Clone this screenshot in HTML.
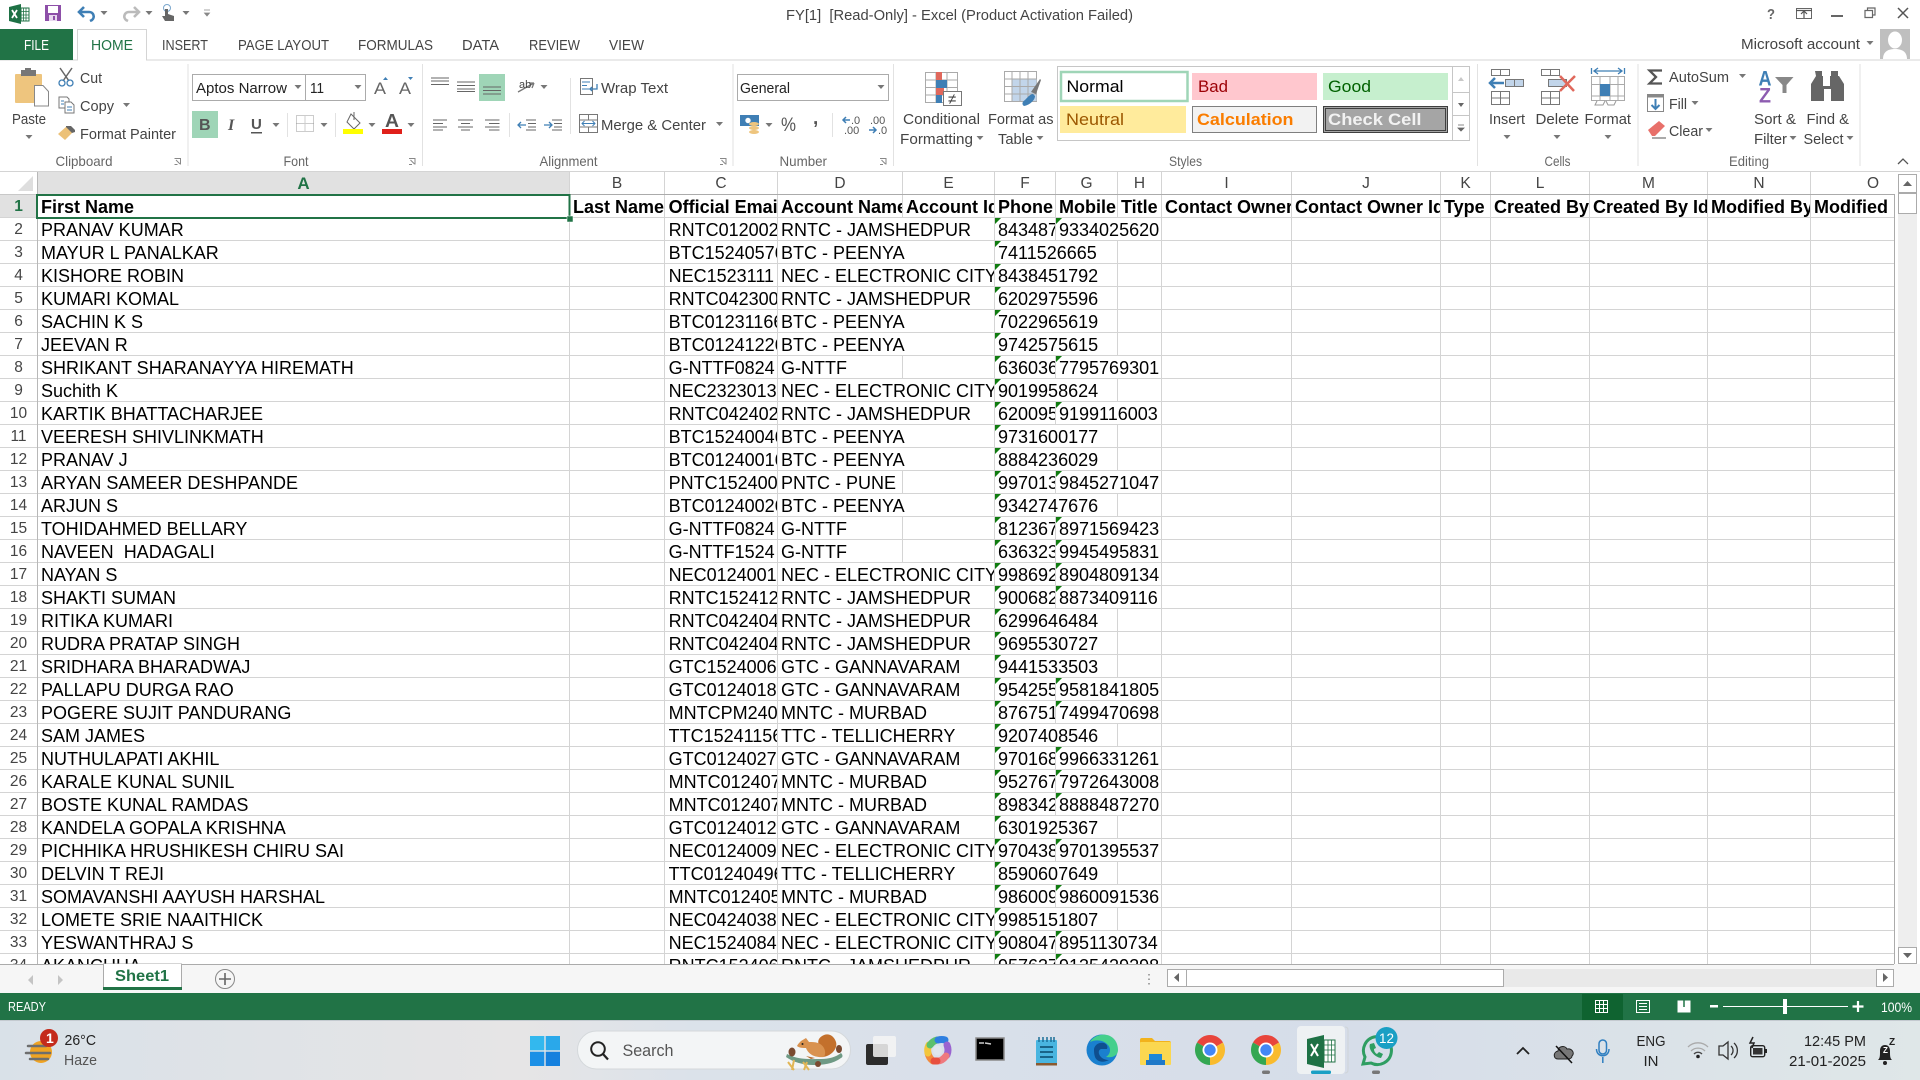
<!DOCTYPE html>
<html><head><meta charset="utf-8"><title>FY[1] [Read-Only] - Excel</title>
<style>
html,body{margin:0;padding:0;width:1920px;height:1080px;overflow:hidden;background:#fff}
.v{position:absolute;top:172px;height:792px;width:1px;background:#d4d4d4}
.hl{position:absolute;left:0;top:195px;width:1894px;height:769px;background:repeating-linear-gradient(#fff 0 22px,#d4d4d4 22px 23px)}
.h{position:absolute;top:172px;height:22px;font:15.5px/23px "Liberation Sans",sans-serif;color:#444;text-align:center;background:#fff}
.r{position:absolute;left:0;width:1894px;height:22px;font:18px/24px "Liberation Sans",sans-serif;color:#000}
.r span{position:absolute;top:0;height:22px;white-space:pre;overflow:hidden;padding-left:3px;box-sizing:border-box;background:#fff}
.r .n{left:0;width:37px;padding:0;text-align:center;color:#444;font-size:15.5px}
.a{left:38px;width:531px}.b{left:570px;width:94px}.r .c{left:665px;width:112px;padding-left:3.6px}
.d{left:778px;width:216px}.d0{left:778px;width:124px}.e{left:903px;width:91px}
.f,.f2,.g{background:linear-gradient(135deg,#107c10 4.2px,#fff 4.3px) !important}
.f{left:995px;width:60px}.f2{left:995px;width:122px}.g{left:1056px;width:105px}
.f0{left:995px;width:60px}.g0{left:1056px;width:61px}.t{left:1118px;width:43px}
.i{left:1162px;width:129px}.j{left:1292px;width:148px}.k{left:1441px;width:49px}
.l{left:1491px;width:98px}.m{left:1590px;width:117px}.o{left:1708px;width:102px}.p{left:1811px;width:83px}
.hd{font-weight:bold}
svg{position:absolute;left:0;top:0}
svg text{font-family:"Liberation Sans",sans-serif;font-size:15px;fill:#444}
</style></head><body>
<div class="hl"></div>
<div class="v" style="left:37px;background:#b8b8b8"></div>
<div class="v" style="left:569px"></div><div class="v" style="left:664px"></div><div class="v" style="left:777px"></div><div class="v" style="left:902px"></div><div class="v" style="left:994px"></div><div class="v" style="left:1055px"></div><div class="v" style="left:1117px"></div><div class="v" style="left:1161px"></div><div class="v" style="left:1291px"></div><div class="v" style="left:1440px"></div><div class="v" style="left:1490px"></div><div class="v" style="left:1589px"></div><div class="v" style="left:1707px"></div><div class="v" style="left:1810px"></div>
<div class="h" style="left:38px;width:531px;background:#e1e1e1;color:#217346;font-weight:bold;font-size:17px">A</div>
<div class="h" style="left:570px;width:94px">B</div><div class="h" style="left:665px;width:112px">C</div><div class="h" style="left:778px;width:124px">D</div><div class="h" style="left:903px;width:91px">E</div><div class="h" style="left:995px;width:60px">F</div><div class="h" style="left:1056px;width:61px">G</div><div class="h" style="left:1118px;width:43px">H</div><div class="h" style="left:1162px;width:129px">I</div><div class="h" style="left:1292px;width:148px">J</div><div class="h" style="left:1441px;width:49px">K</div><div class="h" style="left:1491px;width:98px">L</div><div class="h" style="left:1590px;width:117px">M</div><div class="h" style="left:1708px;width:102px">N</div><div class="h" style="left:1811px;width:83px;text-indent:41px">O</div>
<div class="r hd" style="top:195px"><span class="n" style="background:#e1e1e1;color:#217346;font-weight:bold">1</span><span class="a">First Name</span><span class="b">Last Name</span><span class="c">Official Email</span><span class="d0">Account Name</span><span class="e">Account Id</span><span class="f0">Phone</span><span class="g0">Mobile</span><span class="t">Title</span><span class="i">Contact Owner</span><span class="j">Contact Owner Id</span><span class="k">Type</span><span class="l">Created By</span><span class="m">Created By Id</span><span class="o">Modified By</span><span class="p">Modified</span></div>
<div class="r" style="top:218px"><span class="n">2</span><span class="a">PRANAV KUMAR</span><span class="c">RNTC0120026</span><span class="d">RNTC - JAMSHEDPUR</span><span class="f">8434873</span><span class="g">9334025620</span></div>
<div class="r" style="top:241px"><span class="n">3</span><span class="a">MAYUR L PANALKAR</span><span class="c">BTC15240576</span><span class="d">BTC - PEENYA</span><span class="f2">7411526665</span></div>
<div class="r" style="top:264px"><span class="n">4</span><span class="a">KISHORE ROBIN</span><span class="c">NEC1523111</span><span class="d">NEC - ELECTRONIC CITY</span><span class="f2">8438451792</span></div>
<div class="r" style="top:287px"><span class="n">5</span><span class="a">KUMARI KOMAL</span><span class="c">RNTC0423006</span><span class="d">RNTC - JAMSHEDPUR</span><span class="f2">6202975596</span></div>
<div class="r" style="top:310px"><span class="n">6</span><span class="a">SACHIN K S</span><span class="c">BTC01231166</span><span class="d">BTC - PEENYA</span><span class="f2">7022965619</span></div>
<div class="r" style="top:333px"><span class="n">7</span><span class="a">JEEVAN R</span><span class="c">BTC01241226</span><span class="d">BTC - PEENYA</span><span class="f2">9742575615</span></div>
<div class="r" style="top:356px"><span class="n">8</span><span class="a">SHRIKANT SHARANAYYA HIREMATH</span><span class="c">G-NTTF0824</span><span class="d0">G-NTTF</span><span class="f">6360369</span><span class="g">7795769301</span></div>
<div class="r" style="top:379px"><span class="n">9</span><span class="a">Suchith K</span><span class="c">NEC2323013</span><span class="d">NEC - ELECTRONIC CITY</span><span class="f2">9019958624</span></div>
<div class="r" style="top:402px"><span class="n">10</span><span class="a">KARTIK BHATTACHARJEE</span><span class="c">RNTC0424026</span><span class="d">RNTC - JAMSHEDPUR</span><span class="f">6200959</span><span class="g">9199116003</span></div>
<div class="r" style="top:425px"><span class="n">11</span><span class="a">VEERESH SHIVLINKMATH</span><span class="c">BTC15240046</span><span class="d">BTC - PEENYA</span><span class="f2">9731600177</span></div>
<div class="r" style="top:448px"><span class="n">12</span><span class="a">PRANAV J</span><span class="c">BTC01240016</span><span class="d">BTC - PEENYA</span><span class="f2">8884236029</span></div>
<div class="r" style="top:471px"><span class="n">13</span><span class="a">ARYAN SAMEER DESHPANDE</span><span class="c">PNTC1524006</span><span class="d0">PNTC - PUNE</span><span class="f">9970133</span><span class="g">9845271047</span></div>
<div class="r" style="top:494px"><span class="n">14</span><span class="a">ARJUN S</span><span class="c">BTC01240026</span><span class="d">BTC - PEENYA</span><span class="f2">9342747676</span></div>
<div class="r" style="top:517px"><span class="n">15</span><span class="a">TOHIDAHMED BELLARY</span><span class="c">G-NTTF0824</span><span class="d0">G-NTTF</span><span class="f">8123679</span><span class="g">8971569423</span></div>
<div class="r" style="top:540px"><span class="n">16</span><span class="a">NAVEEN  HADAGALI</span><span class="c">G-NTTF1524</span><span class="d0">G-NTTF</span><span class="f">6363233</span><span class="g">9945495831</span></div>
<div class="r" style="top:563px"><span class="n">17</span><span class="a">NAYAN S</span><span class="c">NEC0124001</span><span class="d">NEC - ELECTRONIC CITY</span><span class="f">9986923</span><span class="g">8904809134</span></div>
<div class="r" style="top:586px"><span class="n">18</span><span class="a">SHAKTI SUMAN</span><span class="c">RNTC1524126</span><span class="d">RNTC - JAMSHEDPUR</span><span class="f">9006823</span><span class="g">8873409116</span></div>
<div class="r" style="top:609px"><span class="n">19</span><span class="a">RITIKA KUMARI</span><span class="c">RNTC0424046</span><span class="d">RNTC - JAMSHEDPUR</span><span class="f2">6299646484</span></div>
<div class="r" style="top:632px"><span class="n">20</span><span class="a">RUDRA PRATAP SINGH</span><span class="c">RNTC0424046</span><span class="d">RNTC - JAMSHEDPUR</span><span class="f2">9695530727</span></div>
<div class="r" style="top:655px"><span class="n">21</span><span class="a">SRIDHARA BHARADWAJ</span><span class="c">GTC1524006</span><span class="d">GTC - GANNAVARAM</span><span class="f2">9441533503</span></div>
<div class="r" style="top:678px"><span class="n">22</span><span class="a">PALLAPU DURGA RAO</span><span class="c">GTC0124018</span><span class="d">GTC - GANNAVARAM</span><span class="f">9542553</span><span class="g">9581841805</span></div>
<div class="r" style="top:701px"><span class="n">23</span><span class="a">POGERE SUJIT PANDURANG</span><span class="c">MNTCPM2406</span><span class="d">MNTC - MURBAD</span><span class="f">8767513</span><span class="g">7499470698</span></div>
<div class="r" style="top:724px"><span class="n">24</span><span class="a">SAM JAMES</span><span class="c">TTC15241156</span><span class="d">TTC - TELLICHERRY</span><span class="f2">9207408546</span></div>
<div class="r" style="top:747px"><span class="n">25</span><span class="a">NUTHULAPATI AKHIL</span><span class="c">GTC0124027</span><span class="d">GTC - GANNAVARAM</span><span class="f">9701683</span><span class="g">9966331261</span></div>
<div class="r" style="top:770px"><span class="n">26</span><span class="a">KARALE KUNAL SUNIL</span><span class="c">MNTC0124076</span><span class="d">MNTC - MURBAD</span><span class="f">9527673</span><span class="g">7972643008</span></div>
<div class="r" style="top:793px"><span class="n">27</span><span class="a">BOSTE KUNAL RAMDAS</span><span class="c">MNTC0124076</span><span class="d">MNTC - MURBAD</span><span class="f">8983423</span><span class="g">8888487270</span></div>
<div class="r" style="top:816px"><span class="n">28</span><span class="a">KANDELA GOPALA KRISHNA</span><span class="c">GTC0124012</span><span class="d">GTC - GANNAVARAM</span><span class="f2">6301925367</span></div>
<div class="r" style="top:839px"><span class="n">29</span><span class="a">PICHHIKA HRUSHIKESH CHIRU SAI</span><span class="c">NEC0124009</span><span class="d">NEC - ELECTRONIC CITY</span><span class="f">9704383</span><span class="g">9701395537</span></div>
<div class="r" style="top:862px"><span class="n">30</span><span class="a">DELVIN T REJI</span><span class="c">TTC01240496</span><span class="d">TTC - TELLICHERRY</span><span class="f2">8590607649</span></div>
<div class="r" style="top:885px"><span class="n">31</span><span class="a">SOMAVANSHI AAYUSH HARSHAL</span><span class="c">MNTC0124056</span><span class="d">MNTC - MURBAD</span><span class="f">9860093</span><span class="g">9860091536</span></div>
<div class="r" style="top:908px"><span class="n">32</span><span class="a">LOMETE SRIE NAAITHICK</span><span class="c">NEC0424038</span><span class="d">NEC - ELECTRONIC CITY</span><span class="f2">9985151807</span></div>
<div class="r" style="top:931px"><span class="n">33</span><span class="a">YESWANTHRAJ S</span><span class="c">NEC1524084</span><span class="d">NEC - ELECTRONIC CITY</span><span class="f">9080473</span><span class="g">8951130734</span></div>
<div class="r" style="top:954px"><span class="n">34</span><span class="a">AKANCHHA</span><span class="c">RNTC1524066</span><span class="d">RNTC - JAMSHEDPUR</span><span class="f">9576373</span><span class="g">9135429298</span></div>

<svg width="1920" height="1080" viewBox="0 0 1920 1080">
<defs>
<path id="k" d="M-3.5-2h7l-3.5 4z" fill="#777"/>
<linearGradient id="tb" x1="0" x2="1" y1="0" y2="0"><stop offset="0" stop-color="#d9e1e8"/><stop offset=".27" stop-color="#e6e5e6"/><stop offset=".36" stop-color="#dbe2ea"/><stop offset=".7" stop-color="#d6dde9"/><stop offset="1" stop-color="#dfe7e8"/></linearGradient>
<g id="chr"><path d="M0 0L-13-7.5A15 15 0 0 1 13-7.5Z" fill="#e8453c"/><path d="M0 0L13-7.5A15 15 0 0 1 0 15Z" fill="#f9bb2d"/><path d="M0 0L0 15A15 15 0 0 1-13-7.5Z" fill="#34a752"/><circle r="7.5" fill="#fff"/><circle r="5.7" fill="#4387f5"/></g>
</defs>

<!-- grid overlays -->
<rect x="37" y="194" width="1857" height="1" fill="#ababab"/>
<rect x="0" y="194" width="37" height="1" fill="#c8c8c8"/>
<rect x="1894" y="194" width="1" height="770" fill="#ababab"/>
<path d="M33 176V191H18Z" fill="#dedede"/>
<rect x="37" y="195" width="532.5" height="23" fill="none" stroke="#217346" stroke-width="2"/>
<rect x="567" y="216" width="6" height="6" fill="#217346" stroke="#fff" stroke-width=".5"/>

<!-- top white chrome -->
<rect x="0" y="0" width="1920" height="171" fill="#fff"/>
<rect x="0" y="171" width="1920" height="1" fill="#d4d4d4"/>
<rect x="0" y="59.5" width="1920" height="1" fill="#d4d4d4"/>
<rect x="0" y="29" width="73" height="31" fill="#217346"/>
<path d="M77.5 60V29.5H146.5V60" fill="#fff" stroke="#d4d4d4"/>
<rect x="78" y="59" width="68" height="2" fill="#fff"/>

<!-- QAT -->
<path d="M9 7L21 4V24L9 21Z" fill="#1e7145"/><rect x="21" y="8" width="8" height="13" fill="#fff" stroke="#217346"/><path d="M23.500 8v13M26 8v13M21 11.500h8M21 15h8M21 18h8" stroke="#217346" stroke-width=".8"/>
<path d="M12 10l5 8M17 10l-5 8" stroke="#fff" stroke-width="1.800"/>
<rect x="45" y="5" width="16" height="16" fill="#8d4fa8"/><rect x="48" y="6" width="10" height="7" fill="#fff"/><rect x="49" y="15" width="8" height="6" fill="#e8d8ef"/><rect x="53" y="16" width="2" height="4" fill="#8d4fa8"/>
<path d="M84 7l-5 5 5 5" fill="none" stroke="#3f7fb5" stroke-width="2.600"/><path d="M80 12h9a4.500 4.500 0 0 1 3 8l-2 1" fill="none" stroke="#3f7fb5" stroke-width="2.600"/>
<use href="#k" x="104" y="13"/>
<path d="M134 7l5 5-5 5" fill="none" stroke="#bbb" stroke-width="2.600"/><path d="M138 12h-9a4.500 4.500 0 0 0-3 8l2 1" fill="none" stroke="#bbb" stroke-width="2.600"/>
<use href="#k" x="149" y="13"/>
<circle cx="167" cy="8" r="3.500" fill="none" stroke="#7aa6cc"/><path d="M165 9h3v5l6 2v5h-9l-3-5h3z" fill="#666"/>
<use href="#k" x="186" y="13"/>
<path d="M204 10h6M204.500 13h5l-2.500 3z" stroke="#888" fill="#888" stroke-width=".8"/>

<text x="786" y="20" textLength="347" lengthAdjust="spacingAndGlyphs" xml:space="preserve">FY[1]  [Read-Only] - Excel (Product Activation Failed)</text>

<!-- window controls -->
<text x="1767" y="19" textLength="8" lengthAdjust="spacingAndGlyphs" style="font-size:15px;fill:#666;font-weight:bold">?</text>
<rect x="1796.500" y="8.500" width="15" height="10" fill="none" stroke="#666"/><path d="M1796 10.500h16M1804 18v-6M1801 14l3-3 3 3" fill="none" stroke="#555" stroke-width="1.200"/>
<rect x="1831" y="15" width="12" height="2" fill="#666"/>
<path d="M1867.500 10.500V8h7.500v7h-2.500M1865 10.500h7.500v7H1865z" fill="none" stroke="#666" stroke-width="1.200"/>
<path d="M1898 8l10 10M1908 8l-10 10" stroke="#555" stroke-width="1.500"/>
<text x="1741" y="49" textLength="119" lengthAdjust="spacingAndGlyphs">Microsoft account</text>
<use href="#k" x="1870" y="43"/>
<rect x="1880" y="29" width="30" height="30" fill="#bfbfbf"/><ellipse cx="1895" cy="40" rx="7" ry="8.500" fill="#fff"/><path d="M1883 59c0-8 6-10 12-10s12 2 12 10z" fill="#fff"/>

<!-- tabs -->
<text x="24" y="50" textLength="25" lengthAdjust="spacingAndGlyphs" style="fill:#fff">FILE</text>
<text x="91" y="50" textLength="42" lengthAdjust="spacingAndGlyphs" style="fill:#217346">HOME</text>
<text x="162" y="50" textLength="46" lengthAdjust="spacingAndGlyphs">INSERT</text>
<text x="238" y="50" textLength="91" lengthAdjust="spacingAndGlyphs">PAGE LAYOUT</text>
<text x="358" y="50" textLength="75" lengthAdjust="spacingAndGlyphs">FORMULAS</text>
<text x="462" y="50" textLength="37" lengthAdjust="spacingAndGlyphs">DATA</text>
<text x="529" y="50" textLength="51" lengthAdjust="spacingAndGlyphs">REVIEW</text>
<text x="609" y="50" textLength="35" lengthAdjust="spacingAndGlyphs">VIEW</text>

<!-- separators -->
<path d="M188 64v102M422.500 64v102M733 64v102M893.500 64v102M1477.500 64v102M1638 64v102M1860 64v102" stroke="#e2e2e2"/>

<!-- Clipboard -->
<rect x="15" y="74" width="27" height="29" fill="#eec57e" rx="1"/><rect x="21" y="70" width="15" height="6" fill="#777"/><rect x="25" y="68" width="6" height="4" fill="#777"/>
<path d="M34.500 85.500H43l5.500 6V106h-14z" fill="#fff" stroke="#888"/>
<text x="12" y="124" textLength="34" lengthAdjust="spacingAndGlyphs">Paste</text>
<use href="#k" x="29" y="137"/>
<path d="M60 68l9 13M72 68l-9 13" stroke="#666" stroke-width="1.500"/><circle cx="62" cy="83" r="3" fill="none" stroke="#3f7fb5" stroke-width="1.300"/><circle cx="70" cy="83" r="3" fill="none" stroke="#3f7fb5" stroke-width="1.300"/>
<text x="80" y="83" textLength="22" lengthAdjust="spacingAndGlyphs">Cut</text>
<path d="M59 97h8l2 2v9H59z" fill="#fff" stroke="#777"/><path d="M65 102h6l3 3v8h-9z" fill="#fff" stroke="#777"/><path d="M67 107h5M67 110h5M61 101h3M61 104h3" stroke="#3f7fb5"/>
<text x="80" y="111" textLength="34" lengthAdjust="spacingAndGlyphs">Copy</text>
<use href="#k" x="126.500" y="105"/>
<path d="M58 134l9-8 6 6-8 8z" fill="#ecc178"/><path d="M66 126l5 0 4 4v2l-3 1-6-6z" fill="#666"/>
<text x="80" y="139" textLength="96" lengthAdjust="spacingAndGlyphs">Format Painter</text>
<text x="55.500" y="166" textLength="57" lengthAdjust="spacingAndGlyphs" style="fill:#666;font-size:14px">Clipboard</text>
<path d="M174.500 158.500h6v6M176 160l4 4M174.500 164.500h3" fill="none" stroke="#888"/>

<!-- Font -->
<rect x="192.500" y="74.500" width="113" height="26" fill="#fff" stroke="#ababab"/><rect x="305.500" y="74.500" width="60" height="26" fill="#fff" stroke="#ababab"/>
<text x="196" y="93" textLength="91" lengthAdjust="spacingAndGlyphs" style="fill:#222">Aptos Narrow</text>
<use href="#k" x="298" y="87"/>
<text x="310" y="93" textLength="14" lengthAdjust="spacingAndGlyphs" style="fill:#222">11</text>
<use href="#k" x="358" y="87"/>
<text x="374" y="94" style="font-size:17px;fill:#666" textLength="12" lengthAdjust="spacingAndGlyphs">A</text><path d="M383 80l2.500-3 2.500 3z" fill="#3f7fb5"/>
<text x="399" y="94" style="font-size:17px;fill:#666" textLength="12" lengthAdjust="spacingAndGlyphs">A</text><path d="M408 77l2.500 3 2.500-3z" fill="#3f7fb5"/>
<rect x="192" y="111" width="26" height="27" fill="#9fd5b7"/>
<text x="199" y="130" style="font-size:16px;font-weight:bold;fill:#555">B</text>
<text x="228" y="130" style="font-size:16px;font-style:italic;font-weight:bold;fill:#555;font-family:'Liberation Serif',serif">I</text>
<text x="251" y="129" style="font-size:15px;font-weight:bold;fill:#555">U</text><rect x="251" y="132" width="11" height="1.500" fill="#555"/>
<use href="#k" x="276" y="125"/>
<path d="M287.500 113v24M335.500 113v24M509.500 113v24M570.500 78v56M832.500 113v24" stroke="#e2e2e2"/>
<rect x="296.500" y="115.500" width="17" height="16" fill="none" stroke="#999" stroke-dasharray="1 1"/><path d="M305 115.500v16M296.500 123.500h17" stroke="#999" stroke-dasharray="1 1"/>
<use href="#k" x="324" y="125"/>
<path d="M351 114l9 9-6 6-7-7z" fill="#fff" stroke="#666"/><path d="M354 112v8" stroke="#666"/><rect x="343" y="129" width="20" height="5" fill="#ffff00"/>
<use href="#k" x="372" y="125"/>
<text x="385" y="127" style="font-size:18px;fill:#555;font-weight:bold" textLength="14" lengthAdjust="spacingAndGlyphs">A</text><rect x="382" y="129" width="20" height="5" fill="#e0201a"/>
<use href="#k" x="411" y="125"/>
<text x="283.500" y="166" textLength="25" lengthAdjust="spacingAndGlyphs" style="fill:#666;font-size:14px">Font</text>
<path d="M409 158.500h6v6M410.500 160l4 4M409 164.500h3" fill="none" stroke="#888"/>

<!-- Alignment -->
<path d="M431 78h18M431 81h18M431 84.500h18" stroke="#666"/>
<path d="M457 82h18M457 85.500h18M457 89h18M457 91.500h18" stroke="#666"/>
<rect x="479" y="74" width="26" height="27" fill="#9fd5b7"/>
<path d="M483 87h18M483 90.500h18M483 94h18" stroke="#666"/>
<path d="M518 92l16-9M534 83l-5 0M534 83l-2 5" fill="none" stroke="#777" stroke-width="1.300"/><text x="519" y="88" style="font-size:11px">ab</text>
<use href="#k" x="544" y="87"/>
<path d="M433 120h14M433 123.500h10M433 127h14M433 130h10M458 120h15M461 123.500h9M458 127h15M461 130h9M485 120h14.500M489 123.500h10.500M485 127h14.500M489 130h10.500" stroke="#666"/>
<path d="M526 120h10M526 130h10M528 123.500h8M528 127h8" stroke="#666"/><path d="M518 125h8M521 122l-3 3 3 3" stroke="#3f7fb5" stroke-width="1.300" fill="none"/>
<path d="M552 120h10M552 130h10M554 123.500h8M554 127h8" stroke="#666"/><path d="M544 125h8M549 122l3 3-3 3" stroke="#3f7fb5" stroke-width="1.300" fill="none"/>
<rect x="580.500" y="78.500" width="12" height="16" fill="#fff" stroke="#777"/><path d="M582 82h8M582 85.500h5M582 89h8" stroke="#3f7fb5"/><path d="M597 84v5h-7M592 87l-2 2 2 2" fill="none" stroke="#3f7fb5" stroke-width="1.300"/>
<text x="601" y="93" textLength="67" lengthAdjust="spacingAndGlyphs">Wrap Text</text>
<rect x="579.500" y="114.500" width="18" height="18" fill="#fff" stroke="#777"/><path d="M579.500 120h18M579.500 127h18M588.500 114.500v5M588.500 127v5" stroke="#777"/><path d="M582 123.500h13M584.500 121l-2.500 2.500 2.500 2.500M592.500 121l2.500 2.500-2.500 2.500" fill="none" stroke="#3f7fb5"/>
<text x="601" y="130" textLength="105" lengthAdjust="spacingAndGlyphs">Merge &amp; Center</text>
<use href="#k" x="719.500" y="124"/>
<text x="539.500" y="166" textLength="58" lengthAdjust="spacingAndGlyphs" style="fill:#666;font-size:14px">Alignment</text>
<path d="M720 158.500h6v6M721.500 160l4 4M720 164.500h3" fill="none" stroke="#888"/>

<!-- Number -->
<rect x="737.500" y="74.500" width="151" height="26" fill="#fff" stroke="#ababab"/>
<text x="740" y="93" textLength="50" lengthAdjust="spacingAndGlyphs" style="fill:#222">General</text>
<use href="#k" x="881" y="87"/>
<rect x="740" y="115" width="19" height="11" fill="#3f7fb5"/><circle cx="748" cy="120.500" r="2.700" fill="#fff"/><ellipse cx="754" cy="124" rx="5" ry="2" fill="#eec57e"/><ellipse cx="754" cy="128" rx="5" ry="2" fill="#eec57e"/><ellipse cx="754" cy="132" rx="5" ry="2" fill="#eec57e"/>
<use href="#k" x="769" y="125"/>
<text x="781" y="131" style="font-size:19px;fill:#555" textLength="15" lengthAdjust="spacingAndGlyphs">%</text>
<text x="813" y="124" style="font-size:19px;font-weight:bold;fill:#555">,</text>
<text x="851" y="124" style="font-size:11px;fill:#555">.0</text><text x="844" y="134" style="font-size:11px;fill:#555">.00</text><path d="M843 120h7M846 117l-3 3 3 3" stroke="#3f7fb5" stroke-width="1.500" fill="none"/>
<text x="870" y="124" style="font-size:11px;fill:#555">.00</text><text x="878" y="134" style="font-size:11px;fill:#555">.0</text><path d="M869 130h7M873 127l3 3-3 3" stroke="#3f7fb5" stroke-width="1.500" fill="none"/>
<text x="779.500" y="166" textLength="47.500" lengthAdjust="spacingAndGlyphs" style="fill:#666;font-size:14px">Number</text>
<path d="M880 158.500h6v6M881.500 160l4 4M880 164.500h3" fill="none" stroke="#888"/>

<!-- Conditional Formatting -->
<g fill="none" stroke="#aaa"><rect x="925.500" y="72.500" width="32" height="30"/><path d="M936 72.500v30M947 72.500v30M925.500 80h32M925.500 87.500h32M925.500 95h32"/></g>
<rect x="936" y="72" width="6" height="8" fill="#e0685c"/><rect x="936" y="80" width="11" height="8" fill="#3f7fb5"/><rect x="936" y="88" width="8" height="7" fill="#e0685c"/><rect x="936" y="95" width="6" height="8" fill="#3f7fb5"/>
<rect x="943.500" y="91.500" width="18" height="14" fill="#fff" stroke="#777"/><text x="948" y="104" style="font-size:15px;fill:#444">≠</text>
<text x="903" y="124" textLength="77" lengthAdjust="spacingAndGlyphs">Conditional</text>
<text x="900" y="144" textLength="73" lengthAdjust="spacingAndGlyphs">Formatting</text>
<use href="#k" x="980" y="138"/>
<!-- Format as Table -->
<rect x="1004.500" y="71.500" width="32" height="30" fill="#fff" stroke="#aaa"/><rect x="1012" y="79" width="24.500" height="22" fill="#c2d5ea"/><path d="M1012 71.500v30M1020 71.500v30M1028 71.500v30M1004.500 79h32M1004.500 86.500h32M1004.500 94h32" stroke="#aaa"/>
<path d="M1031 92l9-13 1 1-5 14z" fill="#777"/><path d="M1024 106c-3-2-1-5 1-6 2-2 5-6 8-6l2 2c0 4-5 9-11 10z" fill="#3f7fb5"/>
<text x="988" y="124" textLength="65.500" lengthAdjust="spacingAndGlyphs">Format as</text>
<text x="998" y="144" textLength="35" lengthAdjust="spacingAndGlyphs">Table</text>
<use href="#k" x="1040" y="138"/>

<!-- Styles gallery -->
<rect x="1057.500" y="66.500" width="412" height="74" fill="#fff" stroke="#c6c6c6"/>
<rect x="1061" y="72" width="126.500" height="29" fill="#fff" stroke="#9fd5b7" stroke-width="2.500"/>
<text x="1066.500" y="92" textLength="57" lengthAdjust="spacingAndGlyphs" style="fill:#000;font-size:17px">Normal</text>
<rect x="1192" y="73" width="125" height="27" fill="#ffc7ce"/>
<text x="1198" y="92" textLength="30" lengthAdjust="spacingAndGlyphs" style="fill:#9c0006;font-size:17px">Bad</text>
<rect x="1323" y="73" width="125" height="27" fill="#c6efce"/>
<text x="1328" y="92" textLength="43" lengthAdjust="spacingAndGlyphs" style="fill:#006100;font-size:17px">Good</text>
<rect x="1060" y="106" width="126" height="27" fill="#ffeb9c"/>
<text x="1066" y="125" textLength="58" lengthAdjust="spacingAndGlyphs" style="fill:#9c5700;font-size:17px">Neutral</text>
<rect x="1192.500" y="106.500" width="124" height="26" fill="#f2f2f2" stroke="#7f7f7f"/>
<text x="1197" y="125" textLength="96.500" lengthAdjust="spacingAndGlyphs" style="fill:#fa7d00;font-size:17px;font-weight:bold">Calculation</text>
<rect x="1323.500" y="106.500" width="124" height="26" fill="#a5a5a5" stroke="#3f3f3f"/><rect x="1325.500" y="108.500" width="120" height="22" fill="none" stroke="#3f3f3f"/>
<text x="1328" y="125" textLength="93.500" lengthAdjust="spacingAndGlyphs" style="fill:#f2f2f2;font-size:17px;font-weight:bold">Check Cell</text>
<path d="M1452.500 66.500v74M1452.500 92.500h17M1452.500 115.500h17" stroke="#c6c6c6"/>
<path d="M1458 81h6l-3-4z" fill="#c8c8c8"/><path d="M1458 103h6l-3 4z" fill="#666"/><path d="M1458 125h6M1458 128h6l-3 3z" stroke="#666" fill="#666" stroke-width=".8"/>
<text x="1169" y="166" textLength="33" lengthAdjust="spacingAndGlyphs" style="fill:#666;font-size:14px">Styles</text>

<!-- Cells -->
<rect x="1491.500" y="69.500" width="18" height="6" fill="#fff" stroke="#777"/><path d="M1500.500 69.500v6" stroke="#777"/>
<path d="M1490 83h14M1495 78l-5 5 5 5" fill="none" stroke="#3f7fb5" stroke-width="2.500"/><rect x="1505.500" y="79.500" width="18" height="7" fill="#c2d5ea" stroke="#777"/><path d="M1514.500 79.500v7" stroke="#777"/>
<rect x="1491.500" y="91.500" width="18" height="13" fill="#fff" stroke="#777"/><path d="M1500.500 91.500v13M1491.500 98h18" stroke="#777"/>
<text x="1489" y="124" textLength="36" lengthAdjust="spacingAndGlyphs">Insert</text><use href="#k" x="1507" y="137"/>
<rect x="1541.500" y="69.500" width="18" height="6" fill="#fff" stroke="#777"/><path d="M1550.500 69.500v6" stroke="#777"/>
<rect x="1548.500" y="79.500" width="18" height="7" fill="#c2d5ea" stroke="#777"/>
<path d="M1560 76l14 15M1575 76l-15 15" stroke="#e0685c" stroke-width="2.500"/>
<rect x="1541.500" y="91.500" width="18" height="13" fill="#fff" stroke="#777"/><path d="M1550.500 91.500v13M1541.500 98h18" stroke="#777"/>
<text x="1535.500" y="124" textLength="43.500" lengthAdjust="spacingAndGlyphs">Delete</text><use href="#k" x="1557" y="137"/>
<path d="M1594 71h28M1598 68l-4 3 4 3M1618 68l4 3-4 3M1591.500 68v6M1624.500 68v6" fill="none" stroke="#3f7fb5" stroke-width="1.300"/>
<rect x="1591.500" y="76.500" width="33" height="24" fill="#fff" stroke="#aaa"/><path d="M1600 76.500v24M1610 76.500v24M1618 76.500v24M1591.500 84.500h33M1591.500 96h33" stroke="#aaa"/><rect x="1600" y="84" width="10" height="12" fill="#3f7fb5"/>
<path d="M1597 101l-2 4h8l2-4M1606 101l2 4h6l2-4" fill="none" stroke="#999"/>
<text x="1584.500" y="124" textLength="46.500" lengthAdjust="spacingAndGlyphs">Format</text><use href="#k" x="1608" y="137"/>
<text x="1544.500" y="166" textLength="26" lengthAdjust="spacingAndGlyphs" style="fill:#666;font-size:14px">Cells</text>

<!-- Editing -->
<path d="M1662 70.500h-12.500l6.500 6.500-6.500 6.500H1662" fill="none" stroke="#555" stroke-width="2.300"/>
<text x="1669" y="82" textLength="60" lengthAdjust="spacingAndGlyphs">AutoSum</text><use href="#k" x="1742.500" y="76"/>
<rect x="1647.500" y="94.500" width="16" height="17" fill="#fff" stroke="#888"/><rect x="1647.500" y="94.500" width="16" height="3" fill="#888"/><path d="M1655.500 99v10M1651.500 105l4 4 4-4" fill="none" stroke="#3f7fb5" stroke-width="2"/>
<text x="1669" y="109" textLength="18" lengthAdjust="spacingAndGlyphs">Fill</text><use href="#k" x="1695" y="103"/>
<path d="M1648 130l11-9 6 5-10 10h-3z" fill="#e8706a"/><path d="M1652 138h14" stroke="#555"/>
<text x="1669" y="136" textLength="34" lengthAdjust="spacingAndGlyphs">Clear</text><use href="#k" x="1709" y="130"/>
<text x="1758.500" y="85.500" textLength="13" lengthAdjust="spacingAndGlyphs" style="font-size:21px;fill:#3f7fb5;font-weight:bold">A</text>
<text x="1759" y="102.500" textLength="12" lengthAdjust="spacingAndGlyphs" style="font-size:21px;fill:#8d5cb0;font-weight:bold">Z</text>
<path d="M1775 77h18.500l-7 8v8h-4v-8z" fill="#888"/>
<text x="1754" y="124" textLength="42" lengthAdjust="spacingAndGlyphs">Sort &amp;</text>
<text x="1754" y="144" textLength="33" lengthAdjust="spacingAndGlyphs">Filter</text><use href="#k" x="1793" y="138"/>
<path d="M1815 71h7v5h1v10h7V76h1v-5h7v5h1l5 8v17h-13V89h-7v12h-13V84l5-8z" fill="#666"/>
<text x="1806.500" y="124" textLength="42.500" lengthAdjust="spacingAndGlyphs">Find &amp;</text>
<text x="1803.500" y="144" textLength="40" lengthAdjust="spacingAndGlyphs">Select</text><use href="#k" x="1850" y="138"/>
<text x="1729" y="166" textLength="40" lengthAdjust="spacingAndGlyphs" style="fill:#666;font-size:14px">Editing</text>
<path d="M1898 164l5-5 5 5" fill="none" stroke="#555" stroke-width="1.300"/>

<!-- vertical scrollbar -->
<rect x="1895" y="172" width="25" height="792" fill="#fff"/>
<rect x="1898" y="174" width="19" height="790" fill="#eeeeee"/>
<rect x="1898.500" y="174.500" width="18" height="18" fill="#fff" stroke="#ababab"/><path d="M1903 186h9l-4.500-5z" fill="#666"/>
<rect x="1898.500" y="193.500" width="18" height="20" fill="#fff" stroke="#ababab"/>
<rect x="1898.500" y="947.500" width="18" height="16" fill="#fff" stroke="#ababab"/><path d="M1903 953h9l-4.500 5z" fill="#666"/>

<!-- sheet bar -->
<rect x="0" y="964" width="1920" height="29" fill="#f6f6f6"/>
<rect x="0" y="964" width="1894" height="1" fill="#ababab"/>
<rect x="103.500" y="964" width="78" height="25" fill="#fff" stroke="#ababab"/><rect x="103" y="987" width="79" height="3" fill="#217346"/><rect x="104" y="964" width="77" height="2" fill="#fff"/>
<text x="115" y="981" textLength="54" lengthAdjust="spacingAndGlyphs" style="fill:#217346;font-weight:bold;font-size:16px">Sheet1</text>
<path d="M33 975v10l-5-5zM58 975v10l5-5z" fill="#c4c4c4"/>
<circle cx="225" cy="979" r="9.500" fill="none" stroke="#888"/><path d="M225 973v12M219 979h12" stroke="#666" stroke-width="1.600"/>
<path d="M1149 974v1.500M1149 978.500v1.500M1149 983v1.500" stroke="#888" stroke-width="1.500"/>
<rect x="1167.500" y="969.500" width="19" height="17" fill="#fff" stroke="#ababab"/><path d="M1179 973v9l-5-4.500z" fill="#666"/>
<rect x="1187" y="969" width="689" height="18" fill="#e9e9e9"/>
<rect x="1186.500" y="969.500" width="317" height="17" fill="#fff" stroke="#ababab"/>
<rect x="1876.500" y="969.500" width="17" height="17" fill="#fff" stroke="#ababab"/><path d="M1883 973v9l5-4.500z" fill="#666"/>

<!-- status bar -->
<rect x="0" y="993" width="1920" height="27" fill="#217346"/>
<text x="8" y="1011" textLength="38" lengthAdjust="spacingAndGlyphs" style="fill:#fff;font-size:13px">READY</text>
<rect x="1582" y="994" width="41" height="26" fill="#0f6330"/>
<g fill="none" stroke="#fff"><rect x="1595.500" y="1000.500" width="12" height="12"/><path d="M1599.500 1000.500v12M1603.500 1000.500v12M1595.500 1004.500h12M1595.500 1008.500h12"/><rect x="1636.500" y="1000.500" width="13" height="12"/><path d="M1639 1003.500h8M1639 1006.500h8M1639 1009.500h8"/></g>
<rect x="1677.500" y="1000.500" width="13" height="12" fill="#fff"/><path d="M1684 1000v7" stroke="#217346" stroke-width="1.500"/>
<rect x="1710" y="1005" width="8" height="2.500" fill="#fff"/><rect x="1723" y="1006" width="125" height="1" fill="#fff"/><rect x="1783" y="999" width="4" height="15" fill="#fff"/>
<path d="M1858 1001v11M1852.500 1006.500h11" stroke="#fff" stroke-width="2.200"/>
<text x="1881" y="1012" textLength="31" lengthAdjust="spacingAndGlyphs" style="fill:#fff;font-size:14px">100%</text>

<!-- taskbar -->
<rect x="0" y="1020" width="1920" height="60" fill="url(#tb)"/><rect x="0" y="1020" width="1920" height="1" fill="#c4cad0"/>
<circle cx="41" cy="1052" r="11" fill="#f0a322"/><path d="M28 1046h18M26 1053h24M30 1059h18" stroke="#6e6e6e" stroke-width="2.500" stroke-linecap="round"/>
<circle cx="49" cy="1038" r="9" fill="#c42b1c"/><text x="46" y="1043" style="fill:#fff;font-size:14px;font-weight:bold">1</text>
<text x="64.500" y="1045" textLength="31.500" lengthAdjust="spacingAndGlyphs" style="fill:#222">26°C</text>
<text x="64" y="1065" textLength="33" lengthAdjust="spacingAndGlyphs" style="fill:#555">Haze</text>
<rect x="530" y="1036" width="14.300" height="14.300" fill="#33b8ee"/><rect x="545.700" y="1036" width="14.300" height="14.300" fill="#2aa8ea"/><rect x="530" y="1051.700" width="14.300" height="14.300" fill="#1c90e6"/><rect x="545.700" y="1051.700" width="14.300" height="14.300" fill="#1580de"/>
<rect x="577.500" y="1031" width="273" height="38" rx="19" fill="#f3f5f6" stroke="#d4d8db"/>
<circle cx="598" cy="1049" r="6.800" fill="none" stroke="#222" stroke-width="2"/><path d="M603 1054l5 5.500" stroke="#222" stroke-width="2.200"/>
<text x="622.500" y="1056" textLength="51" lengthAdjust="spacingAndGlyphs" style="font-size:17px;fill:#555">Search</text>
<!-- squirrel on branch -->
<path d="M787 1054c12 6 22 5 34 5 8 0 15-2 20-6 2 2 2 4 0 5-8 6-18 7-28 7-10 0-20-3-27-8z" fill="#6f9a85"/>
<ellipse cx="792" cy="1052" rx="3.500" ry="4.500" fill="#7a4a30"/><ellipse cx="839" cy="1049" rx="3" ry="4" fill="#7a4a30"/><ellipse cx="818" cy="1064" rx="3" ry="3" fill="#7a4a30"/>
<path d="M788 1062l6 8M794 1060l-2 10M803 1062l6 8M807 1062l-3 8" stroke="#e2b656" stroke-width="2"/>
<path d="M823 1057c8-1 15-8 13-15-2-6-7-9-12-7-5 2-7 6-5 10 1 4 3 7 4 12z" fill="#c3702c"/>
<path d="M801 1041c-2 2-3 3-4 5 2 2 6 2 9 2 2 5 7 10 18 9 3-5 0-12-6-14-3-1-6-1-9-1l-3-4z" fill="#d9924f"/>
<path d="M806 1056l5 3 4-1z" fill="#b5692a"/><circle cx="802.500" cy="1044" r="1" fill="#222"/>
<rect x="866" y="1044" width="22" height="21" rx="2" fill="#2c2c2c"/><rect x="873" y="1036" width="23" height="21" rx="2" fill="#f4f4f4" opacity=".85"/>
<!-- copilot -->
<g fill="none" stroke-width="7" stroke-linecap="round"><path d="M928 1053q1 5 5 8" stroke="#f28a3c"/><path d="M928 1053q-1-4 1-8" stroke="#f3c63c"/><path d="M930 1045q3-4 7-5" stroke="#5cc06c"/><path d="M938 1040q4-1 7 0" stroke="#2f7fe0"/><path d="M947 1045q2 5 0 10" stroke="#9a64d0"/><path d="M946 1056q-4 5-8 5" stroke="#ee7a7f"/><path d="M937 1061q-2 0-3 0" stroke="#e8503e"/></g>
<ellipse cx="937.500" cy="1050.500" rx="4.500" ry="5" fill="#e0e6ec"/>
<rect x="976" y="1038" width="28" height="22" fill="#000" stroke="#8a8a8a" stroke-width="1.500"/><path d="M979 1043h5M985 1043l6 1" stroke="#ccc" stroke-width="1.500"/>
<rect x="1036" y="1040" width="21" height="25" rx="1" fill="#49b5e0"/><path d="M1039 1037v5M1043 1037v5M1047 1037v5M1051 1037v5M1054 1037v5" stroke="#1a6f98" stroke-width="1.500"/><path d="M1040 1047h13M1040 1052h13M1040 1057h13" stroke="#196488" stroke-width="2"/><rect x="1036" y="1063" width="21" height="2.500" fill="#8a5a30"/>
<!-- edge -->
<circle cx="1102" cy="1050" r="15.500" fill="#1a80cf"/><path d="M1090 1042c4-7 14-9 20-6 6 3 8 9 8 14 0 6-6 8-12 7 5-3 5-9 2-12-4-5-12-6-18-3z" fill="#45cf8c"/><path d="M1094 1049c1-5 6-7 10-6 3 1 4 4 3 6l-6 0c-3 1-3 5 0 8 2 2 5 3 8 3-6 3-12 2-14-3-1-3-1-5-1-8z" fill="#0f4f8f"/>
<path d="M1140 1040a2 2 0 0 1 2-2h10l3 3h14a2 2 0 0 1 2 2v21h-31z" fill="#f2b21c"/><rect x="1140" y="1042" width="31" height="23" rx="1" fill="#fbd750"/><rect x="1149" y="1054" width="13" height="8" fill="#1e88d8"/><rect x="1146" y="1060" width="19" height="5" fill="#1e78c8"/>
<use href="#chr" x="1210" y="1050"/>
<use href="#chr" x="1266" y="1050"/>
<rect x="1297" y="1026" width="48" height="48" rx="4" fill="#eef1f3"/><path d="M1345 1027c2 0 3 1 3 3v40c0 2-1 3-3 3" fill="none" stroke="#cfd4d8"/>
<path d="M1307 1039l17-4v33l-17-4z" fill="#1e7145"/><rect x="1324" y="1040" width="11" height="22" fill="#fff" stroke="#217346"/><path d="M1328 1040v22M1331.500 1040v22M1324 1045h11M1324 1050h11M1324 1055h11" stroke="#217346" stroke-width=".8"/>
<path d="M1311 1044l7 12M1318 1044l-7 12" stroke="#fff" stroke-width="2"/>
<rect x="1311" y="1070.500" width="20" height="3.500" rx="1.500" fill="#1a9fc4"/>
<rect x="1262" y="1070.500" width="8" height="3.500" rx="1.700" fill="#777"/><rect x="1372" y="1070.500" width="8" height="3.500" rx="1.700" fill="#777"/>
<path d="M1363 1064l2-7a14 14 0 1 1 6 6z" fill="none" stroke="#2f9e62" stroke-width="3"/><path d="M1370 1044c-2 5 4 13 11 14l2-4-4-2-2 2c-2-1-3-3-3-5l2-1-2-5z" fill="#2f9e62"/>
<circle cx="1386.500" cy="1038" r="11" fill="#1a9fc4"/><text x="1379" y="1043" textLength="15" lengthAdjust="spacingAndGlyphs" style="fill:#fff;font-size:14px">12</text>
<path d="M1517 1054l6-6 6 6" fill="none" stroke="#222" stroke-width="1.800"/>
<path d="M1558 1059c-5 0-5-7 0-8 0-5 7-6 9-2 5-1 8 4 5 7 0 2-2 3-4 3z" fill="#777" stroke="#222"/><path d="M1556 1046l16 17" stroke="#111" stroke-width="1.500"/>
<rect x="1599" y="1040" width="7.500" height="14" rx="3.700" fill="none" stroke="#2f7fc0" stroke-width="1.500"/><path d="M1596.500 1049c0 9 12.500 9 12.500 0M1602.800 1057v6" fill="none" stroke="#2f7fc0" stroke-width="1.500"/>
<text x="1636.500" y="1046" textLength="29" lengthAdjust="spacingAndGlyphs" style="fill:#222">ENG</text>
<text x="1643.500" y="1066" textLength="15" lengthAdjust="spacingAndGlyphs" style="fill:#222">IN</text>
<path d="M1688 1047a14 14 0 0 1 20 0M1691 1051a10 10 0 0 1 14 0" fill="none" stroke="#aaa" stroke-width="1.300"/><path d="M1694 1054a5.500 5.500 0 0 1 8 0" fill="none" stroke="#444" stroke-width="1.300"/><circle cx="1698" cy="1056.500" r="1.800" fill="#222"/>
<path d="M1719 1046h4l5-4v17l-5-4h-4z" fill="none" stroke="#333" stroke-width="1.300"/><path d="M1731 1046a6 6 0 0 1 0 9M1734 1043a10 10 0 0 1 0 15" fill="none" stroke="#333" stroke-width="1.300"/>
<rect x="1750.700" y="1045.700" width="14" height="11" rx="2" fill="none" stroke="#222" stroke-width="1.400"/><rect x="1753" y="1048" width="9.500" height="6.500" fill="#333"/><rect x="1765" y="1049" width="2" height="4" fill="#222"/><path d="M1753 1037l-3 6h4l-2 5" fill="none" stroke="#222" stroke-width="1.500"/>
<text x="1804" y="1046" textLength="62" lengthAdjust="spacingAndGlyphs" style="fill:#222;font-size:15px">12:45 PM</text>
<text x="1789" y="1066" textLength="77" lengthAdjust="spacingAndGlyphs" style="fill:#222;font-size:15px">21-01-2025</text>
<path d="M1878 1060c2-2 2-4 2-9 0-4 2-6 5-6s5 2 5 6c0 5 0 7 2 9z" fill="#222"/><circle cx="1885" cy="1063" r="2" fill="#222"/><text x="1883" y="1053" style="font-size:8px;fill:#fff;font-weight:bold">Z</text><text x="1889" y="1045" style="font-size:10px;fill:#222;font-weight:bold">Z</text>
</svg>
</body></html>
